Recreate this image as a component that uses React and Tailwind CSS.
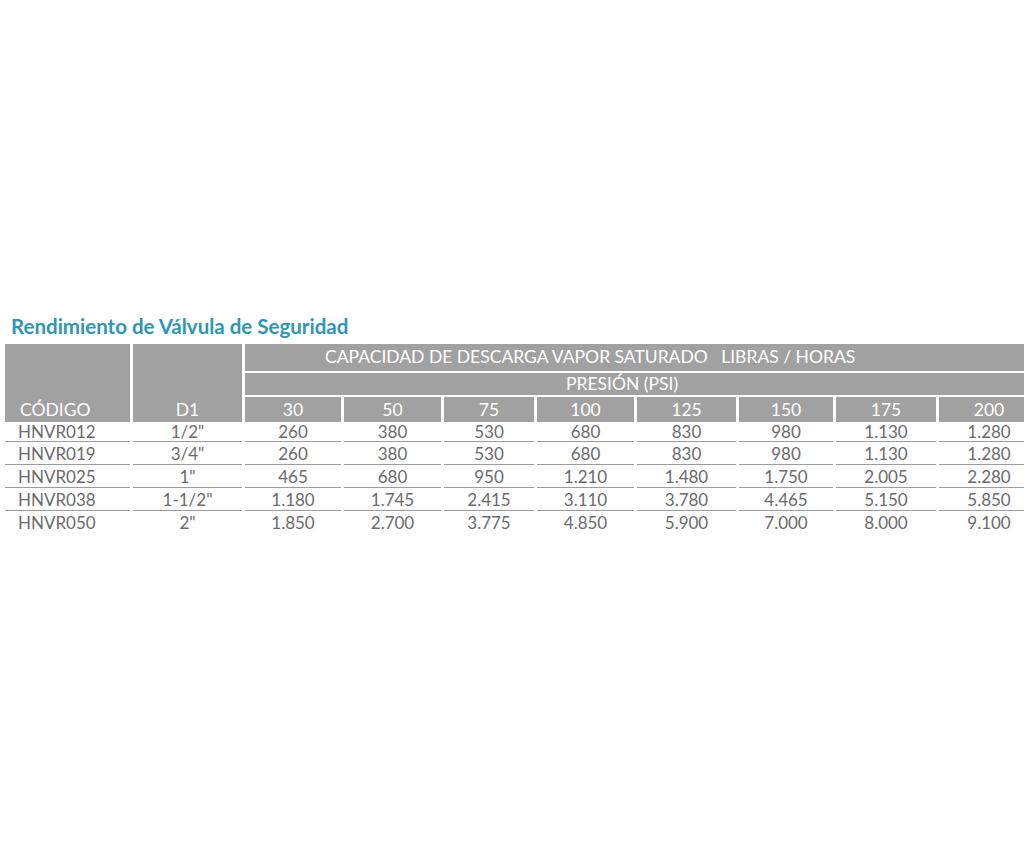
import React from "react";

const PRESSURES = ["30", "50", "75", "100", "125", "150", "175", "200"];

const ROWS = [
  { code: "HNVR012", d1: "1/2\"", vals: ["260", "380", "530", "680", "830", "980", "1.130", "1.280"] },
  { code: "HNVR019", d1: "3/4\"", vals: ["260", "380", "530", "680", "830", "980", "1.130", "1.280"] },
  { code: "HNVR025", d1: "1\"", vals: ["465", "680", "950", "1.210", "1.480", "1.750", "2.005", "2.280"] },
  { code: "HNVR038", d1: "1-1/2\"", vals: ["1.180", "1.745", "2.415", "3.110", "3.780", "4.465", "5.150", "5.850"] },
  { code: "HNVR050", d1: "2\"", vals: ["1.850", "2.700", "3.775", "4.850", "5.900", "7.000", "8.000", "9.100"] },
];

const COLS = "grid-cols-[125px_109px_96px_97px_90px_97px_99px_94px_100px_100px] gap-x-[3px]";

export default function App() {
  return (
    <div className="h-[853px] w-[1024px] overflow-hidden bg-white font-['Lato',sans-serif]">
      <div className="pt-[313px]">
        <h2 className="pl-[11px] text-[20.5px] font-bold leading-[26px] text-[#2d97b5]">
          Rendimiento de Válvula de Seguridad
        </h2>

        <div className={`ml-[5px] mt-[5px] grid ${COLS} grid-rows-[27px_22px_25px] gap-y-[2px] text-[17.5px] text-white`}>
          <div className="row-span-3 flex items-end bg-[#a1a1a1] pl-[15px] leading-[24px]">CÓDIGO</div>
          <div className="row-span-3 flex items-end justify-center bg-[#a1a1a1] leading-[24px]">D1</div>
          <div className="col-span-8 flex items-center bg-[#a1a1a1] pl-[80px] whitespace-pre">
            CAPACIDAD DE DESCARGA VAPOR SATURADO   LIBRAS / HORAS
          </div>
          <div className="col-span-8 flex items-center bg-[#a1a1a1] pl-[321px]">PRESIÓN (PSI)</div>
          {PRESSURES.map((p) => (
            <div key={p} className="flex items-end justify-center bg-[#a1a1a1] leading-[24px]">
              {p}
            </div>
          ))}
        </div>

        <div className="ml-[5px] text-[17px] text-[#6b6b6b]">
          {ROWS.map((r, i) => (
            <div key={r.code} className={`grid ${COLS}`}>
              <div className={`pl-[13px] ${i === 0 ? "h-[20px] leading-[20px]" : "h-[23px] leading-[23px]"} ${i < 4 ? "border-b border-[#9c9c9c]" : ""}`}>
                {r.code}
              </div>
              <div className={`text-center ${i === 0 ? "h-[20px] leading-[20px]" : "h-[23px] leading-[23px]"} ${i < 4 ? "border-b border-[#9c9c9c]" : ""}`}>
                {r.d1}
              </div>
              {r.vals.map((v, j) => (
                <div
                  key={j}
                  className={`text-center ${i === 0 ? "h-[20px] leading-[20px]" : "h-[23px] leading-[23px]"} ${i < 4 ? "border-b border-[#9c9c9c]" : ""}`}
                >
                  {v}
                </div>
              ))}
            </div>
          ))}
        </div>
      </div>
    </div>
  );
}
